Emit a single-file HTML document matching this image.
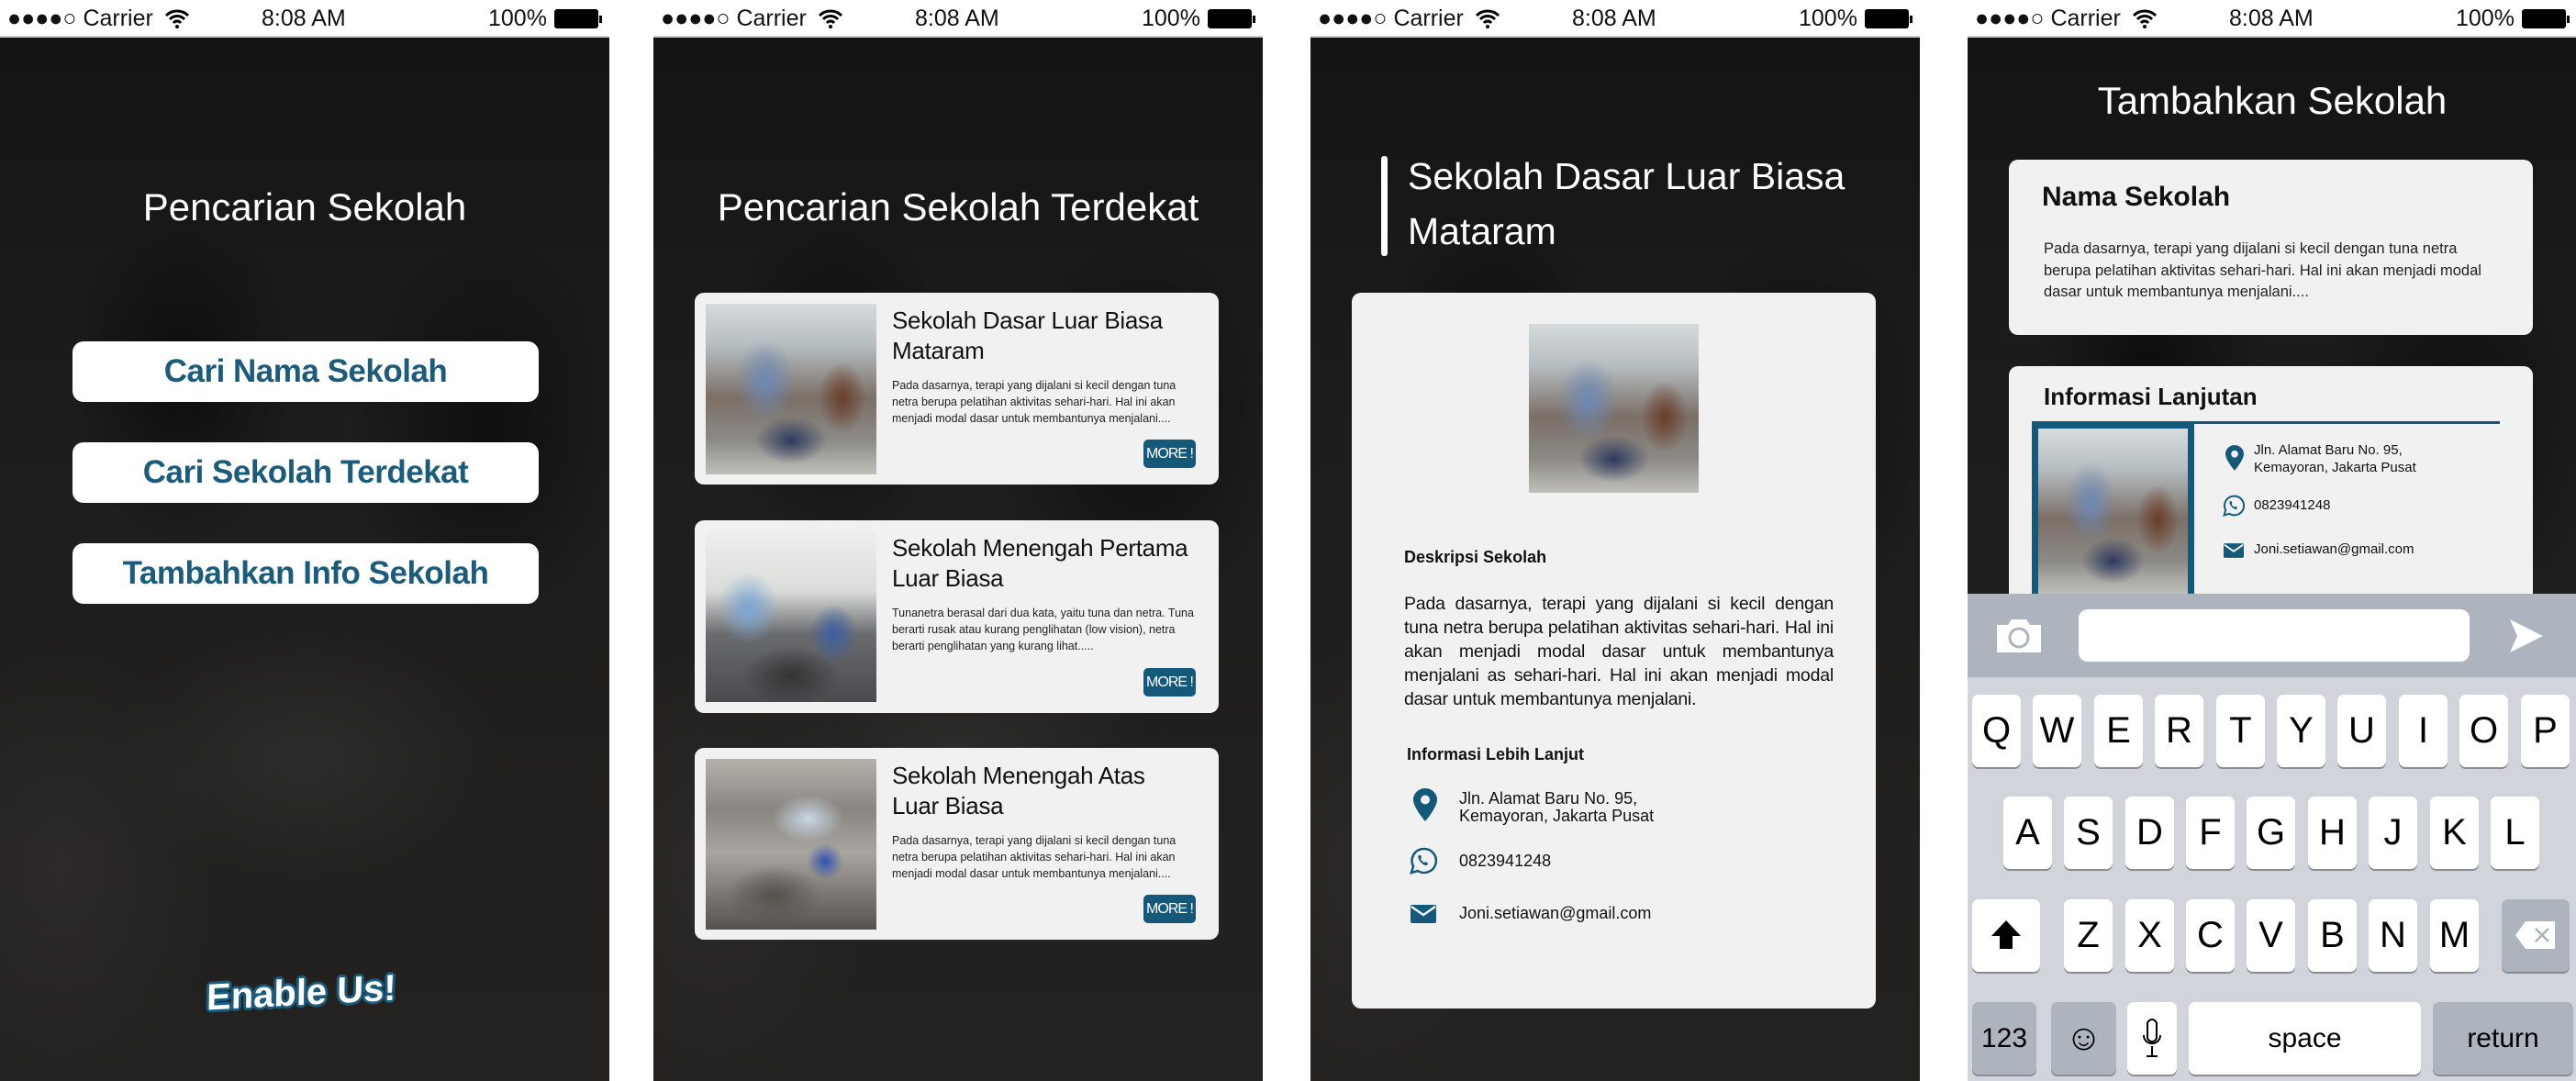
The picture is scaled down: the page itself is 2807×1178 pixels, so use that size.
<!DOCTYPE html>
<html><head><meta charset="utf-8"><style>
*{margin:0;padding:0;box-sizing:border-box}
body{width:2807px;height:1178px;background:#fff;position:relative;overflow:hidden;font-family:"Liberation Sans",sans-serif}
.ph{position:absolute;top:0;width:664px;height:1178px;overflow:hidden;
background:
radial-gradient(ellipse 180px 260px at 30% 35%,rgba(0,0,0,.55),transparent 70%),
radial-gradient(ellipse 220px 300px at 80% 40%,rgba(0,0,0,.5),transparent 70%),
radial-gradient(ellipse 300px 200px at 50% 70%,rgba(70,68,66,.35),transparent 70%),
radial-gradient(ellipse 250px 350px at 10% 80%,rgba(60,56,52,.4),transparent 70%),
linear-gradient(180deg,#131313 0%,#1d1d1d 40%,#242221 100%)}
.sb{position:absolute;left:0;top:0;width:100%;height:41px;background:#fff;border-bottom:2px solid #c8c8c8;font-size:25px;color:#111}
.sb span{position:absolute;top:6px}
.sb svg{position:absolute;left:180px;top:9px}
.bat{position:absolute;right:12px;top:10px;width:48px;height:21px;border:2px solid #000;border-radius:3px;background:#000}
.bat:after{content:"";position:absolute;right:-6px;top:5px;width:3px;height:8px;background:#000}
.t{position:absolute;color:#fff;text-align:center;width:100%;font-size:42px}
.btn{position:absolute;left:79px;width:508px;height:66px;background:#fff;border-radius:12px;color:#1b5b7c;font-weight:bold;font-size:35px;text-align:center;line-height:66px;letter-spacing:-.5px}
.card{position:absolute;background:#f1f1f1;border-radius:10px}
.img{position:absolute;background:
radial-gradient(ellipse 25% 35% at 35% 45%,#6d88b4,transparent 70%),
radial-gradient(ellipse 30% 20% at 50% 80%,#2d3a5e,transparent 70%),
radial-gradient(ellipse 20% 30% at 80% 55%,#6a3d2a,transparent 70%),
linear-gradient(180deg,#d6dbdc 0%,#b5bcc0 25%,#7b6f66 55%,#8c8a86 80%,#c0c0bb 100%)}
.img2{background:
radial-gradient(ellipse 25% 30% at 25% 45%,#7ca6d6,transparent 70%),
radial-gradient(ellipse 20% 25% at 75% 60%,#3b5fa0,transparent 70%),
radial-gradient(ellipse 40% 25% at 50% 85%,#333,transparent 70%),
linear-gradient(180deg,#eef0ee 0%,#d9dcd8 35%,#6b6c70 60%,#4a4a4e 100%)}
.img3{background:
radial-gradient(ellipse 30% 20% at 60% 35%,#c8d8e6,transparent 70%),
radial-gradient(ellipse 15% 15% at 70% 60%,#2f52b0,transparent 70%),
radial-gradient(ellipse 40% 25% at 40% 80%,#55504a,transparent 70%),
linear-gradient(180deg,#b4b0aa 0%,#8a8580 30%,#a8a5a0 55%,#55524f 100%)}
.ctitle{position:absolute;left:215px;top:14px;font-size:26px;line-height:33px;color:#111;width:360px;letter-spacing:-.3px;white-space:nowrap}
.cbody{position:absolute;left:215px;top:92px;font-size:12.5px;line-height:18px;color:#222;width:340px}
.more{position:absolute;right:25px;bottom:18px;width:57px;height:31px;background:#14587a;border-radius:5px;color:#fff;font-size:16px;line-height:31px;text-align:center;letter-spacing:-1px}
.key{position:absolute;width:53px;height:79px;background:#fff;border-radius:7px;box-shadow:0 2px 0 #888d94;font-size:40px;text-align:center;line-height:79px;color:#000}
.gk{background:#adb4bd}
.ic{position:absolute}
</style></head><body>

<!-- PHONE 1 -->
<div class="ph" style="left:0">
 <div class="sb"><span style="left:8px">●●●●○ Carrier</span><svg width="26" height="22" viewBox="0 0 26 22"><path d="M1 8a17 17 0 0 1 24 0M5 12a11 11 0 0 1 16 0M9 16a5 5 0 0 1 8 0" fill="none" stroke="#000" stroke-width="3"/><circle cx="13" cy="20" r="2" fill="#000"/></svg><span style="left:285px">8:08 AM</span><span style="left:532px">100%</span><div class="bat"></div></div>
 <div class="t" style="top:202px">Pencarian Sekolah</div>
 <div class="btn" style="top:372px">Cari Nama Sekolah</div>
 <div class="btn" style="top:482px">Cari Sekolah Terdekat</div>
 <div class="btn" style="top:592px">Tambahkan Info Sekolah</div>
 <div style="position:absolute;left:225px;top:1060px;font-size:40px;font-weight:900;color:#fff;transform:rotate(-3deg) skewX(-4deg);text-shadow:3px 0 #1b5b7c,-3px 0 #1b5b7c,0 3px #1b5b7c,0 -3px #1b5b7c,2px 2px #1b5b7c,-2px -2px #1b5b7c,2px -2px #1b5b7c,-2px 2px #1b5b7c">Enable Us!</div>
</div>

<!-- PHONE 2 -->
<div class="ph" style="left:712px">
 <div class="sb"><span style="left:8px">●●●●○ Carrier</span><svg width="26" height="22" viewBox="0 0 26 22"><path d="M1 8a17 17 0 0 1 24 0M5 12a11 11 0 0 1 16 0M9 16a5 5 0 0 1 8 0" fill="none" stroke="#000" stroke-width="3"/><circle cx="13" cy="20" r="2" fill="#000"/></svg><span style="left:285px">8:08 AM</span><span style="left:532px">100%</span><div class="bat"></div></div>
 <div class="t" style="top:202px">Pencarian Sekolah Terdekat</div>
 <div class="card" style="left:45px;top:319px;width:571px;height:209px">
  <div class="img" style="left:12px;top:12px;width:186px;height:186px"></div>
  <div class="ctitle">Sekolah Dasar Luar Biasa<br>Mataram</div>
  <div class="cbody">Pada dasarnya, terapi yang dijalani si kecil dengan tuna netra berupa pelatihan aktivitas sehari-hari. Hal ini akan menjadi modal dasar untuk membantunya menjalani....</div>
  <div class="more">MORE !</div>
 </div>
 <div class="card" style="left:45px;top:567px;width:571px;height:210px">
  <div class="img img2" style="left:12px;top:12px;width:186px;height:186px"></div>
  <div class="ctitle">Sekolah Menengah Pertama<br>Luar Biasa</div>
  <div class="cbody">Tunanetra berasal dari dua kata, yaitu tuna dan netra. Tuna berarti rusak atau kurang penglihatan (low vision), netra berarti penglihatan yang kurang lihat.....</div>
  <div class="more">MORE !</div>
 </div>
 <div class="card" style="left:45px;top:815px;width:571px;height:209px">
  <div class="img img3" style="left:12px;top:12px;width:186px;height:186px"></div>
  <div class="ctitle">Sekolah Menengah Atas<br>Luar Biasa</div>
  <div class="cbody">Pada dasarnya, terapi yang dijalani si kecil dengan tuna netra berupa pelatihan aktivitas sehari-hari. Hal ini akan menjadi modal dasar untuk membantunya menjalani....</div>
  <div class="more">MORE !</div>
 </div>
</div>

<!-- PHONE 3 -->
<div class="ph" style="left:1428px">
 <div class="sb"><span style="left:8px">●●●●○ Carrier</span><svg width="26" height="22" viewBox="0 0 26 22"><path d="M1 8a17 17 0 0 1 24 0M5 12a11 11 0 0 1 16 0M9 16a5 5 0 0 1 8 0" fill="none" stroke="#000" stroke-width="3"/><circle cx="13" cy="20" r="2" fill="#000"/></svg><span style="left:285px">8:08 AM</span><span style="left:532px">100%</span><div class="bat"></div></div>
 <div style="position:absolute;left:77px;top:170px;width:7px;height:109px;background:#fff;border-radius:3px"></div>
 <div style="position:absolute;left:106px;top:162px;color:#fff;font-size:41px;line-height:60px;width:540px">Sekolah Dasar Luar Biasa Mataram</div>
 <div class="card" style="left:45px;top:319px;width:571px;height:780px">
  <div class="img" style="left:193px;top:34px;width:185px;height:184px"></div>
  <div style="position:absolute;left:57px;top:278px;font-size:18px;font-weight:bold;color:#111">Deskripsi Sekolah</div>
  <div style="position:absolute;left:57px;top:326px;width:468px;font-size:19.5px;line-height:26px;text-align:justify;color:#111;letter-spacing:-.2px">Pada dasarnya, terapi yang dijalani si kecil dengan tuna netra berupa pelatihan aktivitas sehari-hari. Hal ini akan menjadi modal dasar untuk membantunya menjalani as sehari-hari. Hal ini akan menjadi modal dasar untuk membantunya menjalani.</div>
  <div style="position:absolute;left:60px;top:493px;font-size:18px;font-weight:bold;color:#111">Informasi Lebih Lanjut</div>
  <svg class="ic" style="left:67px;top:540px" width="26" height="36" viewBox="0 0 26 36"><path d="M13 0C6 0 0 5.5 0 12.5 0 21 13 36 13 36S26 21 26 12.5C26 5.5 20 0 13 0z" fill="#14587a"/><circle cx="13" cy="12.5" r="5" fill="#f1f1f1"/></svg>
  <div style="position:absolute;left:117px;top:542px;font-size:18px;line-height:19px;color:#111">Jln. Alamat Baru No. 95,<br>Kemayoran, Jakarta Pusat</div>
  <svg class="ic" style="left:63px;top:604px" width="30" height="30" viewBox="0 0 30 30"><path d="M15 2A13 13 0 0 0 4 21L2 28 9 26A13 13 0 1 0 15 2z" fill="none" stroke="#14587a" stroke-width="2.5"/><path d="M10 9c-1 1-1 3 1 6s5 5 7 5c1 0 2-1 2-2l-2-2-2 1c-2-1-3-2-4-4l1-2-1-2z" fill="#14587a"/></svg>
  <div style="position:absolute;left:117px;top:609px;font-size:18px;color:#111">0823941248</div>
  <svg class="ic" style="left:64px;top:667px" width="28" height="20" viewBox="0 0 28 20"><rect width="28" height="20" rx="2" fill="#14587a"/><path d="M1 2L14 11 27 2" fill="none" stroke="#f1f1f1" stroke-width="2.5"/></svg>
  <div style="position:absolute;left:117px;top:666px;font-size:18px;color:#111">Joni.setiawan@gmail.com</div>
 </div>
</div>

<!-- PHONE 4 -->
<div class="ph" style="left:2144px">
 <div class="sb"><span style="left:8px">●●●●○ Carrier</span><svg width="26" height="22" viewBox="0 0 26 22"><path d="M1 8a17 17 0 0 1 24 0M5 12a11 11 0 0 1 16 0M9 16a5 5 0 0 1 8 0" fill="none" stroke="#000" stroke-width="3"/><circle cx="13" cy="20" r="2" fill="#000"/></svg><span style="left:285px">8:08 AM</span><span style="left:532px">100%</span><div class="bat"></div></div>
 <div class="t" style="top:86px">Tambahkan Sekolah</div>
 <div class="card" style="left:45px;top:174px;width:571px;height:191px">
  <div style="position:absolute;left:36px;top:24px;font-size:30px;font-weight:bold;color:#111">Nama Sekolah</div>
  <div style="position:absolute;left:38px;top:86px;width:490px;font-size:16.5px;line-height:23.5px;color:#222">Pada dasarnya, terapi yang dijalani si kecil dengan tuna netra berupa pelatihan aktivitas sehari-hari. Hal ini akan menjadi modal dasar untuk membantunya menjalani....</div>
 </div>
 <div class="card" style="left:45px;top:399px;width:571px;height:340px">
  <div style="position:absolute;left:38px;top:18px;font-size:26px;font-weight:bold;color:#111">Informasi Lanjutan</div>
  <div style="position:absolute;left:25px;top:60px;width:510px;height:3px;background:#14587a"></div>
  <div style="position:absolute;left:25px;top:60px;width:177px;height:200px;background:#14587a"></div>
  <div class="img" style="left:32px;top:68px;width:163px;height:180px"></div>
  <svg class="ic" style="left:236px;top:86px" width="20" height="28" viewBox="0 0 26 36"><path d="M13 0C6 0 0 5.5 0 12.5 0 21 13 36 13 36S26 21 26 12.5C26 5.5 20 0 13 0z" fill="#14587a"/><circle cx="13" cy="12.5" r="5" fill="#f1f1f1"/></svg>
  <div style="position:absolute;left:267px;top:82px;font-size:15px;line-height:19px;color:#111">Jln. Alamat Baru No. 95,<br>Kemayoran, Jakarta Pusat</div>
  <svg class="ic" style="left:233px;top:140px" width="24" height="24" viewBox="0 0 30 30"><path d="M15 2A13 13 0 0 0 4 21L2 28 9 26A13 13 0 1 0 15 2z" fill="none" stroke="#14587a" stroke-width="2.5"/><path d="M10 9c-1 1-1 3 1 6s5 5 7 5c1 0 2-1 2-2l-2-2-2 1c-2-1-3-2-4-4l1-2-1-2z" fill="#14587a"/></svg>
  <div style="position:absolute;left:267px;top:143px;font-size:15px;color:#111">0823941248</div>
  <svg class="ic" style="left:234px;top:193px" width="22" height="16" viewBox="0 0 28 20"><rect width="28" height="20" rx="2" fill="#14587a"/><path d="M1 2L14 11 27 2" fill="none" stroke="#f1f1f1" stroke-width="2.5"/></svg>
  <div style="position:absolute;left:267px;top:191px;font-size:15px;color:#111">Joni.setiawan@gmail.com</div>
 </div>
 <!-- keyboard -->
 <div style="position:absolute;left:0;top:647px;width:664px;height:531px;background:#d1d5db">
  <div style="position:absolute;left:0;top:0;width:664px;height:91px;background:#adb4bd"></div>
  <svg style="position:absolute;left:30px;top:26px" width="52" height="38" viewBox="0 0 52 38"><path d="M2 8h12l4-6h16l4 6h12v30H2z" fill="#fff"/><circle cx="26" cy="22" r="10" fill="none" stroke="#adb4bd" stroke-width="3"/></svg>
  <div style="position:absolute;left:121px;top:17px;width:426px;height:57px;background:#fff;border-radius:10px"></div>
  <svg style="position:absolute;left:589px;top:26px" width="40" height="40" viewBox="0 0 40 40"><path d="M2 2L38 20 2 38 10 20z" fill="#fff"/></svg>
 </div>
 <div class="key" style="left:5px;top:757px">Q</div><div class="key" style="left:71px;top:757px">W</div><div class="key" style="left:138px;top:757px">E</div><div class="key" style="left:204px;top:757px">R</div><div class="key" style="left:271px;top:757px">T</div><div class="key" style="left:337px;top:757px">Y</div><div class="key" style="left:403px;top:757px">U</div><div class="key" style="left:470px;top:757px">I</div><div class="key" style="left:536px;top:757px">O</div><div class="key" style="left:603px;top:757px">P</div>
 <div class="key" style="left:39px;top:868px">A</div><div class="key" style="left:105px;top:868px">S</div><div class="key" style="left:172px;top:868px">D</div><div class="key" style="left:238px;top:868px">F</div><div class="key" style="left:304px;top:868px">G</div><div class="key" style="left:371px;top:868px">H</div><div class="key" style="left:437px;top:868px">J</div><div class="key" style="left:504px;top:868px">K</div><div class="key" style="left:570px;top:868px">L</div>
 <div class="key" style="left:5px;top:980px;width:74px"><svg width="34" height="34" viewBox="0 0 34 34" style="margin-top:22px"><path d="M17 1L33 18H24V32H10V18H1z" fill="#000"/></svg></div>
 <div class="key" style="left:105px;top:980px">Z</div><div class="key" style="left:172px;top:980px">X</div><div class="key" style="left:238px;top:980px">C</div><div class="key" style="left:304px;top:980px">V</div><div class="key" style="left:371px;top:980px">B</div><div class="key" style="left:437px;top:980px">N</div><div class="key" style="left:504px;top:980px">M</div>
 <div class="key gk" style="left:582px;top:980px;width:74px"><svg width="46" height="34" viewBox="0 0 46 34" style="margin-top:22px"><path d="M12 2h32v30H12L1 17z" fill="#fff"/><path d="M23 10l14 14M37 10L23 24" stroke="#adb4bd" stroke-width="2.5"/></svg></div>
 <div class="key gk" style="left:5px;top:1092px;width:70px;font-size:30px">123</div>
 <div class="key gk" style="left:91px;top:1092px;width:71px;font-size:40px">&#x263A;</div>
 <div class="key" style="left:174px;top:1092px;width:54px"><svg width="20" height="44" viewBox="0 0 20 44" style="margin-top:18px"><rect x="5" y="1" width="10" height="24" rx="5" fill="none" stroke="#000" stroke-width="2"/><path d="M1 18c0 12 18 12 18 0M10 30v10M4 41h12" fill="none" stroke="#000" stroke-width="2"/></svg></div>
 <div class="key" style="left:241px;top:1092px;width:253px;font-size:30px">space</div>
 <div class="key gk" style="left:507px;top:1092px;width:153px;font-size:30px">return</div>
</div>
</body></html>
